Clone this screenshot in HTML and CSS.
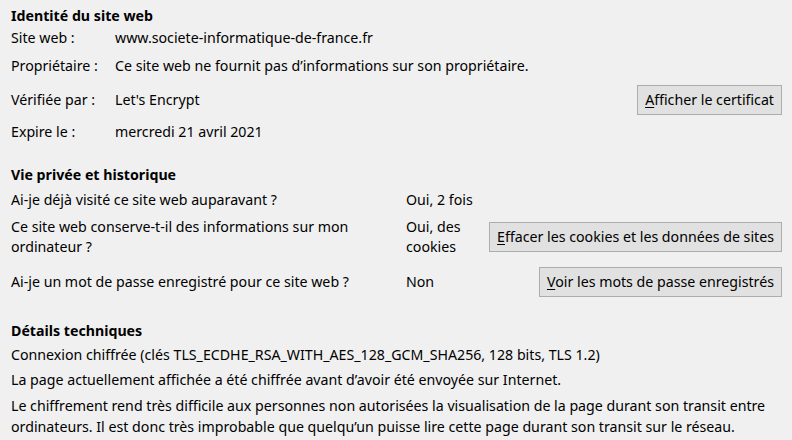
FILE: index.html
```html
<!DOCTYPE html>
<html lang="fr">
<head>
<meta charset="utf-8">
<link rel="stylesheet" href="styles.css">
</head>
<body>
<section class="sec identity">
  <h2 class="title">Identité du site web</h2>
  <div class="idgrid">
    <div class="lbl r1">Site web :</div><div class="val r1">www.societe-informatique-de-france.fr</div><div class="r1"></div>
    <div class="lbl r2">Propriétaire :</div><div class="val r2">Ce site web ne fournit pas d’informations sur son propriétaire.</div><div class="r2"></div>
    <div class="lbl r3">Vérifiée par :</div><div class="val r3">Let's Encrypt</div><div class="r3 btncell"><button class="btn"><u>A</u>fficher le certificat</button></div>
    <div class="lbl r4">Expire le :</div><div class="val r4">mercredi 21 avril 2021</div><div class="r4"></div>
  </div>
</section>
<section class="sec privacy">
  <h2 class="title">Vie privée et historique</h2>
  <div class="pgrid">
    <div class="q q1">Ai-je déjà visité ce site web auparavant ?</div><div class="a q1">Oui, 2 fois</div><div class="q1"></div>
    <div class="q q2">Ce site web conserve-t-il des informations sur mon ordinateur ?</div><div class="a q2">Oui, des cookies</div><div class="q2 btncell"><button class="btn"><u>E</u>ffacer les cookies et les données de sites</button></div>
    <div class="q q3">Ai-je un mot de passe enregistré pour ce site web ?</div><div class="a q3">Non</div><div class="q3 btncell"><button class="btn"><u>V</u>oir les mots de passe enregistrés</button></div>
  </div>
</section>
<section class="sec tech">
  <h2 class="title">Détails techniques</h2>
  <p class="line t1">Connexion chiffrée (clés TLS_ECDHE_RSA_WITH_AES_128_GCM_SHA256, 128 bits, TLS 1.2)</p>
  <p class="line t2">La page actuellement affichée a été chiffrée avant d’avoir été envoyée sur Internet.</p>
  <p class="line t3">Le chiffrement rend très difficile aux personnes non autorisées la visualisation de la page durant son transit entre ordinateurs. Il est donc très improbable que quelqu’un puisse lire cette page durant son transit sur le réseau.</p>
</section>
</body>
</html>
```
FILE: styles.css
```css
html, body {
  margin: 0;
  padding: 0;
  background: #f0f0f0;
}
body {
  font-family: "Noto Sans", "Open Sans", sans-serif;
  font-size: 14.2px;
  color: #000;
  padding: 6px 11px 0 11px;
  width: 770px;
  line-height: 20px;
}
.title {
  font-size: 14.2px;
  font-weight: bold;
  margin: 0;
  line-height: 20px;
}
.sec { margin: 0; }
.idgrid {
  display: grid;
  grid-template-columns: 104px 1fr auto;
}
.idgrid > div { display: flex; align-items: center; }
.idgrid .r1 { height: 24px; }
.idgrid .r2 { height: 32px; }
.idgrid .r3 { height: 36px; }
.idgrid .r4 { height: 28px; }
.btncell { justify-content: flex-end; }
.btn {
  font: inherit;
  color: #000;
  background: #e1e1e1;
  border: 1px solid #adadad;
  border-radius: 0;
  height: 30px;
  padding: 0 7px;
  line-height: 20px;
  margin: 0 -1px 0 0;
}
.btn u { text-decoration: underline; text-underline-offset: 2px; }
.privacy { margin-top: 19px; }
.pgrid {
  display: grid;
  grid-template-columns: 395px 81px 1fr;
}
.pgrid > div { display: flex; align-items: center; }
.pgrid .q { padding-right: 30px; }
.pgrid .q1 { height: 30px; }
.pgrid .q2 { height: 44px; }
.pgrid .q3 { height: 46px; }
.tech { margin-top: 16px; }
.line { margin: 0; }
.t1 { margin-top: 4px; }
.t2 { margin-top: 5px; }
.t3 { margin-top: 4.5px; line-height: 21px; }
```
